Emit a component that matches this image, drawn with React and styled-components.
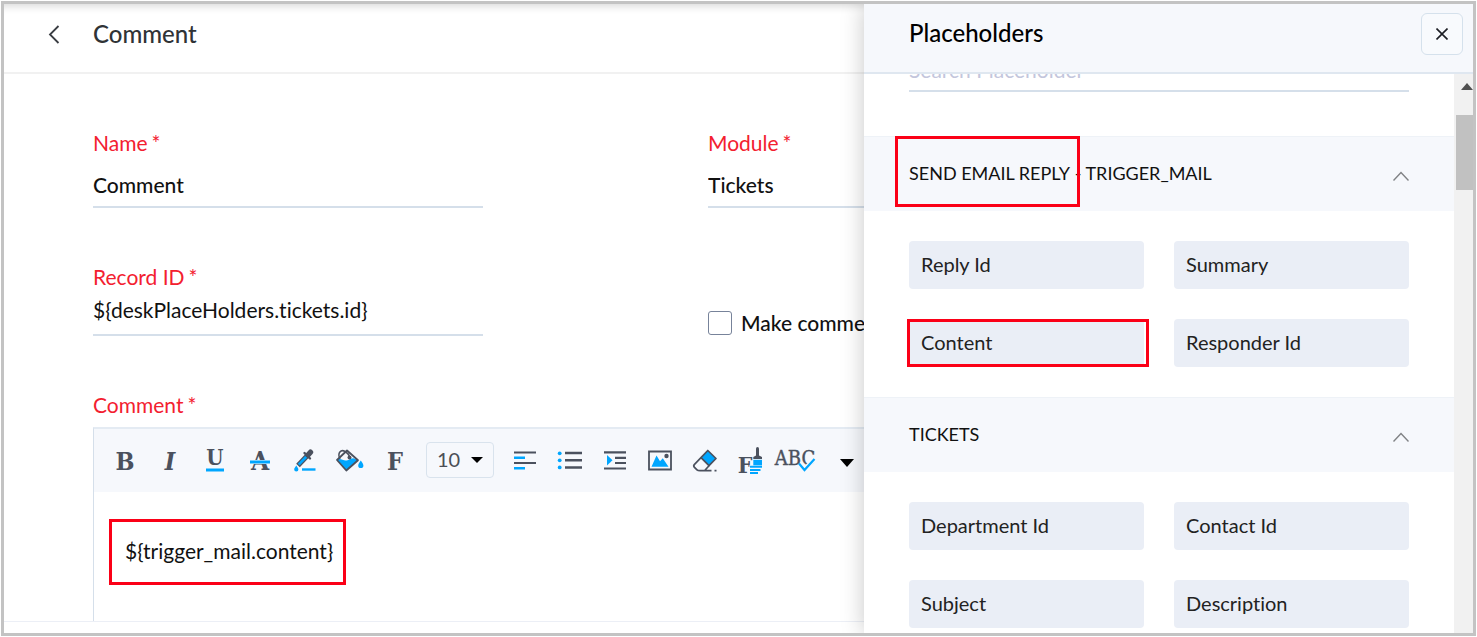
import React, { useLayoutEffect, useRef } from 'react';
import styled, { createGlobalStyle } from 'styled-components';

const GlobalStyle = createGlobalStyle`
  * {
    box-sizing: border-box;
  }

  body {
    margin: 0;
    background: #fff;
    color: #111;
    font-family: Lato, "Liberation Sans", sans-serif;
    font-variant-ligatures: none;
  }

  button, input, select, textarea {
    font-family: inherit;
    font-variant-ligatures: inherit;
    color: inherit;
  }
`;

const ink = '#4b515e';
const blue = '#00a6ff';

const Page = styled.div`
  height: 100vh;
  padding: 1px;
`;

const Frame = styled.div`
  position: relative;
  height: 100%;
  border: 3px solid #c3c3c3;
  overflow: hidden;
`;

const Main = styled.main`
  display: flex;
  flex-direction: column;
  height: 100%;
`;

const MainHeader = styled.header`
  display: flex;
  align-items: center;
  flex: none;
  height: 70px;
  padding: 0 40px 8px;
  border-bottom: 2px solid #f1f1f1;
  box-shadow: inset 0 10px 8px -8px rgba(0, 0, 0, 0.16);
`;

const BackButton = styled.button`
  display: flex;
  width: 49px;
  padding: 0;
  border: 0;
  background: none;
`;

const Title = styled.h1`
  margin: 0;
  color: #303336;
  font-size: 24px;
  font-weight: 500;
  line-height: 30px;
`;

const Form = styled.form`
  display: flex;
  flex-direction: column;
  flex: 1;
  min-height: 0;
  padding: 56px 89px 0;
`;

const Fields = styled.div`
  display: grid;
  grid-template-columns: repeat(2, minmax(0, 390px));
  gap: 56px 225px;
`;

const Field = styled.div`
  display: flex;
  flex-direction: column;
`;

const Label = styled.label`
  color: #f3202f;
  font-size: 21px;
  line-height: 26px;
`;

const Star = styled.span`
  margin-left: 4px;
`;

const TextInput = styled.input`
  width: 100%;
  height: ${p => (p.$tight ? 46 : 52)}px;
  padding: ${p => (p.$tight ? '0 0 6px' : '6px 0 0')};
  border: 0;
  border-bottom: 2px solid #d5dfea;
  background: none;
  font-size: 21px;
  font-weight: ${p => (p.$tight ? 400 : 500)};
  outline: none;
`;

const CheckLabel = styled.label`
  display: flex;
  align-items: center;
  align-self: end;
  gap: 9px;
  font-size: 21px;
  font-weight: 500;
  line-height: 26px;
`;

const Checkbox = styled.input`
  appearance: none;
  width: 24px;
  height: 24px;
  margin: 0;
  border: 1px solid #77839a;
  border-radius: 3px;
  background: #fff;
`;

const EditorField = styled(Field)`
  flex: 1;
  min-height: 0;
  gap: 9px;
  margin-top: 56px;
`;

const Editor = styled.div`
  display: flex;
  flex-direction: column;
  flex: 1;
  min-height: 0;
  border: 1px solid #d5dfea;
  border-top: 2px solid #e4ebf3;
  border-bottom: 0;
`;

const Toolbar = styled.div`
  display: flex;
  align-items: center;
  flex: none;
  height: 63px;
  padding: 0 0 2px 9px;
  background: #f6f8fc;
`;

const Tool = styled.button`
  display: flex;
  justify-content: center;
  flex: none;
  width: ${p => (p.$wide ? 60 : 45)}px;
  padding: ${p => (p.$wide ? '6px 0 0' : 0)};
  border: 0;
  background: none;

  text {
    fill: ${ink};
    font-family: "DejaVu Serif Condensed", "DejaVu Serif", serif;
    text-anchor: middle;
  }
`;

const SizeBox = styled.div`
  display: grid;
  align-items: center;
  width: 68px;
  height: 36px;
  margin: 0 8px;

  > * {
    grid-area: 1 / 1;
  }

  svg {
    justify-self: end;
    margin-right: 11px;
    pointer-events: none;
  }
`;

const SizeSelect = styled.select`
  appearance: none;
  width: 100%;
  height: 100%;
  padding: 0 10px 2px;
  border: 1px solid #d9e3ed;
  border-radius: 4px;
  background: none;
  color: #4b4f56;
  font-size: 20px;
`;

const EditorBody = styled.div`
  position: relative;
  display: flex;
  flex: 1;
  min-height: 0;
`;

const EditorText = styled.textarea`
  flex: 1;
  padding: 46px 31px 0;
  border: 0;
  background: none;
  font-size: 21px;
  line-height: 26px;
  resize: none;
  overflow: hidden;
  outline: none;
`;

const Footer = styled.footer`
  flex: none;
  height: 12px;
  border-top: 1px solid #eceff6;
`;

/* red frame laid over the part it points out */
const Callout = styled.span`
  position: absolute;
  inset: ${p => p.$inset};
  width: ${p => p.$width || 'auto'};
  border: 3px solid #fb0017;
  pointer-events: none;
`;

const Drawer = styled.aside`
  position: absolute;
  top: 0;
  right: 0;
  bottom: 0;
  display: flex;
  flex-direction: column;
  width: 609px;
  background: #fff;
  box-shadow: 0 0 22px rgba(0, 0, 0, 0.22);
`;

const DrawerHeader = styled.header`
  display: flex;
  align-items: center;
  justify-content: space-between;
  flex: none;
  height: 70px;
  padding: 0 10px 8px 45px;
  border-bottom: 2px solid #dfe7f0;
  background: #f6f8fc;
`;

const DrawerTitle = styled.h2`
  margin: 0;
  padding-bottom: 2px;
  color: #000;
  font-size: 24px;
  font-weight: 500;
  line-height: 30px;
`;

const CloseButton = styled.button`
  display: flex;
  align-items: center;
  justify-content: center;
  width: 42px;
  height: 42px;
  padding: 0;
  border: 1px solid #d5e1ec;
  border-radius: 6px;
  background: #f8fafd;
`;

const DrawerBody = styled.div`
  display: flex;
  flex: 1;
  min-height: 0;
`;

const DrawerList = styled.div`
  flex: 1;
  padding-bottom: 60px;
  overflow: hidden;
`;

const Search = styled.div`
  padding: 0 45px 44px;
`;

const SearchInput = styled.input`
  width: 100%;
  height: 48px;
  padding: 4px 0 0;
  border: 0;
  border-bottom: 2px solid #d5dfea;
  background: none;
  font-size: 21px;
  outline: none;

  &::placeholder {
    color: #c3c6dc;
    opacity: 1;
  }
`;

const SectionToggle = styled.button`
  display: flex;
  align-items: center;
  justify-content: space-between;
  width: 100%;
  height: 75px;
  padding: 0 45px 2px;
  border: 0;
  border-top: 1px solid #eef2f7;
  background: #f6f8fc;
  font-size: 18px;
  line-height: 24px;

  svg {
    margin-top: 6px;
  }
`;

const Marked = styled.span`
  position: relative;
`;

const Chips = styled.div`
  display: grid;
  grid-template-columns: 1fr 1fr;
  gap: 30px;
  padding: 30px 45px;
`;

const Chip = styled.button`
  position: relative;
  height: 48px;
  padding: 0 12px 2px;
  border: 0;
  border-radius: 4px;
  background: #eaeef6;
  color: #222;
  font-size: 20px;
  text-align: left;
`;

const Scrollbar = styled.div`
  display: flex;
  flex-direction: column;
  align-items: flex-end;
  width: 19px;
  padding-top: 9px;
  background: #f1f1f1;
`;

const Thumb = styled.div`
  width: 17px;
  height: 75px;
  margin-top: 25px;
  background: #c1c1c1;
`;

const Icon = ({ children }) => (
  <svg width="45" height="36" viewBox="0 -3 45 36" fill="none" aria-hidden="true">
    {children}
  </svg>
);

const Caret = ({ width, height }) => (
  <svg width={width} height={height} viewBox="0 0 14 8" preserveAspectRatio="none" aria-hidden="true">
    <path d="M0 0h14L7 8z" fill="#000" />
  </svg>
);

const Chevron = () => (
  <svg width="16" height="10" viewBox="0 0 16 10" fill="none" aria-hidden="true">
    <path d="M0.5 9.5 8 1.5l7.5 8" stroke="#808285" strokeWidth="1.4" />
  </svg>
);

const textTools = [
  {
    name: 'Bold',
    icon: <text x="22" y="25" fontSize="25" fontWeight="700">B</text>,
  },
  {
    name: 'Italic',
    icon: <text x="22" y="25" fontSize="25" fontWeight="700" fontStyle="italic">I</text>,
  },
  {
    name: 'Underline',
    icon: (
      <>
        <text x="22" y="20" fontSize="22" fontWeight="700">U</text>
        <path d="M13 25h18" stroke={blue} strokeWidth="3" />
      </>
    ),
  },
  {
    name: 'Strikethrough',
    icon: (
      <>
        <text x="22" y="25" fontSize="26" fontWeight="700">A</text>
        <path d="M12 17h20" stroke="#f6f8fc" strokeWidth="4" />
        <path d="M12 17h20" stroke={blue} strokeWidth="3" />
      </>
    ),
  },
  {
    name: 'Text colour',
    icon: (
      <>
        <path d="M15 20.5 24 11" stroke={ink} strokeWidth="5" />
        <path d="M15.7 19.7 23.5 11.5" stroke={blue} strokeWidth="2.6" />
        <path d="m21.5 8 5.5 5.5" stroke={ink} strokeWidth="2.4" strokeLinecap="round" />
        <path d="m25 10 2.5-2.8" stroke={ink} strokeWidth="5.4" strokeLinecap="round" />
        <path d="M13.3 20.5c1.2 1.8 2.1 2.7 2.1 4a2.1 2.1 0 0 1-4.2 0c0-1.3.9-2.2 2.1-4z" fill={blue} />
        <path d="M19 24.5h13.5" stroke={blue} strokeWidth="2.4" />
      </>
    ),
  },
  {
    name: 'Background colour',
    icon: (
      <>
        <path d="M9 15c3-2.5 6 1 9.5.5 3-.5 4-2.3 7-2.3l4.500 2-11.700 10.300z" fill={blue} />
        <path d="M9 15 19 5.500l11 9.700-11.700 10.300z" stroke={ink} strokeWidth="1.800" strokeLinejoin="round" />
        <path d="M12 14C9 8 13 4 17 6.500c2.500 1.500 4.300 3.500 4.500 5.500" stroke={ink} strokeWidth="1.500" />
        <circle cx="21.500" cy="12.500" r="2" fill={ink} />
        <path d="M32.800 15.500c1.500 2.200 2.600 3.500 2.600 5a2.600 2.600 0 0 1-5.200 0c0-1.500 1.100-2.800 2.600-5z" fill={blue} />
      </>
    ),
  },
  {
    name: 'Font',
    icon: <text x="22" y="25" fontSize="25" fontWeight="700">F</text>,
  },
];

const blockTools = [
  {
    name: 'Align',
    icon: (
      <>
        <path d="M12 7.500h22M12 18h22" stroke={ink} strokeWidth="2.200" />
        <path d="M12 12.700h11M12 23.300h11" stroke={blue} strokeWidth="2.400" />
      </>
    ),
  },
  {
    name: 'List',
    icon: (
      <>
        <path d="M18 8h17M18 15.200h17M18 22.500h17" stroke={ink} strokeWidth="2.600" />
        <circle cx="12.700" cy="8.300" r="1.900" fill={blue} />
        <circle cx="12.700" cy="15.300" r="1.900" fill={blue} />
        <circle cx="12.700" cy="22.400" r="1.900" fill={blue} />
      </>
    ),
  },
  {
    name: 'Indent',
    icon: (
      <>
        <path d="M12 7.300h22M23 12.800h11M23 18h11M12 23.500h22" stroke={ink} strokeWidth="2.200" />
        <path d="m15 10 5.500 5.200L15 20.400z" fill={blue} />
      </>
    ),
  },
  {
    name: 'Image',
    icon: (
      <>
        <path d="M12 6.500h22v18H12z" stroke={ink} strokeWidth="1.800" />
        <path d="m14.500 21.700 5-11.200 3.500 5.700 2.800-2.900 5.700 8.400z" fill={blue} />
        <circle cx="29.500" cy="11" r="2.200" fill={ink} />
      </>
    ),
  },
  {
    name: 'Clear formatting',
    icon: (
      <>
        <path d="m25.800 5.500 8.200 8-7 7.200-8-8z" fill={blue} stroke={ink} strokeWidth="1.700" strokeLinejoin="round" />
        <path d="m19 12.700-6.500 6.600c-1 1-1 2 0 3l2.500 2.500c.8.800 1.500.900 3 .900h4.500l4.500-5M17 25.700h12.500M32.500 25.700h2" stroke={ink} strokeWidth="1.700" />
      </>
    ),
  },
  {
    name: 'Format painter',
    icon: (
      <>
        <text x="18" y="28" fontSize="23" fontWeight="700">F</text>
        <path d="M22.500 20h14v9h-14z" fill="#f6f8fc" />
        <path d="M30.500 3.500v8" stroke={ink} strokeWidth="3" strokeLinecap="round" />
        <path d="M26.300 14v-2l2.700-1.500h3l3 1.500v2z" fill={ink} />
        <path d="M26.300 14.800H35v5.500h-8.700z" fill={blue} />
        <path d="M23 21.800h12M23 25h10.500M23 28h8" stroke={blue} strokeWidth="1.900" />
      </>
    ),
  },
  {
    name: 'Spell check',
    icon: (
      <>
        <text x="23" y="20" fontSize="20" stroke={ink} strokeWidth="0.400">ABC</text>
        <path d="m27 18.500 5.500 6.500 10-11" stroke="#f6f8fc" strokeWidth="5" />
        <path d="m27 18.500 5.500 6.500 10-11" stroke={blue} strokeWidth="2.200" />
      </>
    ),
  },
];

const sections = [
  {
    mark: 'SEND EMAIL REPLY',
    title: ' - TRIGGER_MAIL',
    items: ['Reply Id', 'Summary', 'Content', 'Responder Id'],
    marked: 'Content',
  },
  {
    title: 'TICKETS',
    items: ['Department Id', 'Contact Id', 'Subject', 'Description'],
  },
];

function RequiredLabel({ htmlFor, children }) {
  return (
    <Label htmlFor={htmlFor}>
      {children}
      <Star>*</Star>
    </Label>
  );
}

function Tools({ items }) {
  return items.map(tool => (
    <Tool key={tool.name} type="button" aria-label={tool.name}>
      <Icon>{tool.icon}</Icon>
    </Tool>
  ));
}

function CommentEditor() {
  return (
    <EditorField>
      <RequiredLabel htmlFor="comment">Comment</RequiredLabel>
      <Editor>
        <Toolbar>
          <Tools items={textTools} />
          <SizeBox>
            <SizeSelect aria-label="Font size" defaultValue="10">
              <option>10</option>
            </SizeSelect>
            <Caret width={12} height={6} />
          </SizeBox>
          <Tools items={blockTools} />
          <Tool type="button" $wide aria-label="More">
            <Caret width={14} height={8} />
          </Tool>
        </Toolbar>
        <EditorBody>
          <EditorText id="comment" defaultValue="${trigger_mail.content}" />
          <Callout $inset="27px auto 36px 15px" $width="237px" />
        </EditorBody>
      </Editor>
    </EditorField>
  );
}

function PlaceholderSection({ section }) {
  return (
    <section>
      <SectionToggle type="button" aria-expanded="true">
        <span>
          {section.mark && (
            <Marked>
              {section.mark}
              <Callout $inset="-26px -10px -23px -14px" />
            </Marked>
          )}
          {section.title}
        </span>
        <Chevron />
      </SectionToggle>
      <Chips>
        {section.items.map(item => (
          <Chip key={item} type="button">
            {item}
            {item === section.marked && <Callout $inset="0 -5px 0 -2px" />}
          </Chip>
        ))}
      </Chips>
    </section>
  );
}

function PlaceholdersDrawer() {
  const list = useRef(null);

  useLayoutEffect(() => {
    list.current.scrollTop = 30;
  }, []);

  return (
    <Drawer>
      <DrawerHeader>
        <DrawerTitle>Placeholders</DrawerTitle>
        <CloseButton type="button" aria-label="Close">
          <svg width="12" height="12" viewBox="0 0 12 12" aria-hidden="true">
            <path d="m0.500 0.500 11 11M11.500 0.500l-11 11" stroke="#1c1e24" strokeWidth="1.600" />
          </svg>
        </CloseButton>
      </DrawerHeader>
      <DrawerBody>
        <DrawerList ref={list}>
          <Search>
            <SearchInput type="text" placeholder="Search Placeholder" aria-label="Search Placeholder" />
          </Search>
          {sections.map(section => (
            <PlaceholderSection key={section.title} section={section} />
          ))}
        </DrawerList>
        <Scrollbar>
          <svg width="12" height="7" viewBox="0 0 12 7" aria-hidden="true">
            <path d="M0 7 6 0l6 7z" fill="#505050" />
          </svg>
          <Thumb />
        </Scrollbar>
      </DrawerBody>
    </Drawer>
  );
}

function App() {
  return (
    <Page>
      <GlobalStyle />
      <Frame>
        <Main>
          <MainHeader>
            <BackButton type="button" aria-label="Back">
              <svg width="20" height="20" viewBox="0 0 20 20" fill="none" aria-hidden="true">
                <path d="M14.500 2 6 10.500l8.500 8.500" stroke="#3a3d42" strokeWidth="1.800" />
              </svg>
            </BackButton>
            <Title>Comment</Title>
          </MainHeader>
          <Form>
            <Fields>
              <Field>
                <RequiredLabel htmlFor="name">Name</RequiredLabel>
                <TextInput id="name" type="text" defaultValue="Comment" />
              </Field>
              <Field>
                <RequiredLabel htmlFor="module">Module</RequiredLabel>
                <TextInput id="module" type="text" defaultValue="Tickets" />
              </Field>
              <Field>
                <RequiredLabel htmlFor="record">Record ID</RequiredLabel>
                <TextInput $tight id="record" type="text" defaultValue="${deskPlaceHolders.tickets.id}" />
              </Field>
              <CheckLabel>
                <Checkbox type="checkbox" />
                Make comment
              </CheckLabel>
            </Fields>
            <CommentEditor />
          </Form>
          <Footer />
        </Main>
        <PlaceholdersDrawer />
      </Frame>
    </Page>
  );
}

export default App;
